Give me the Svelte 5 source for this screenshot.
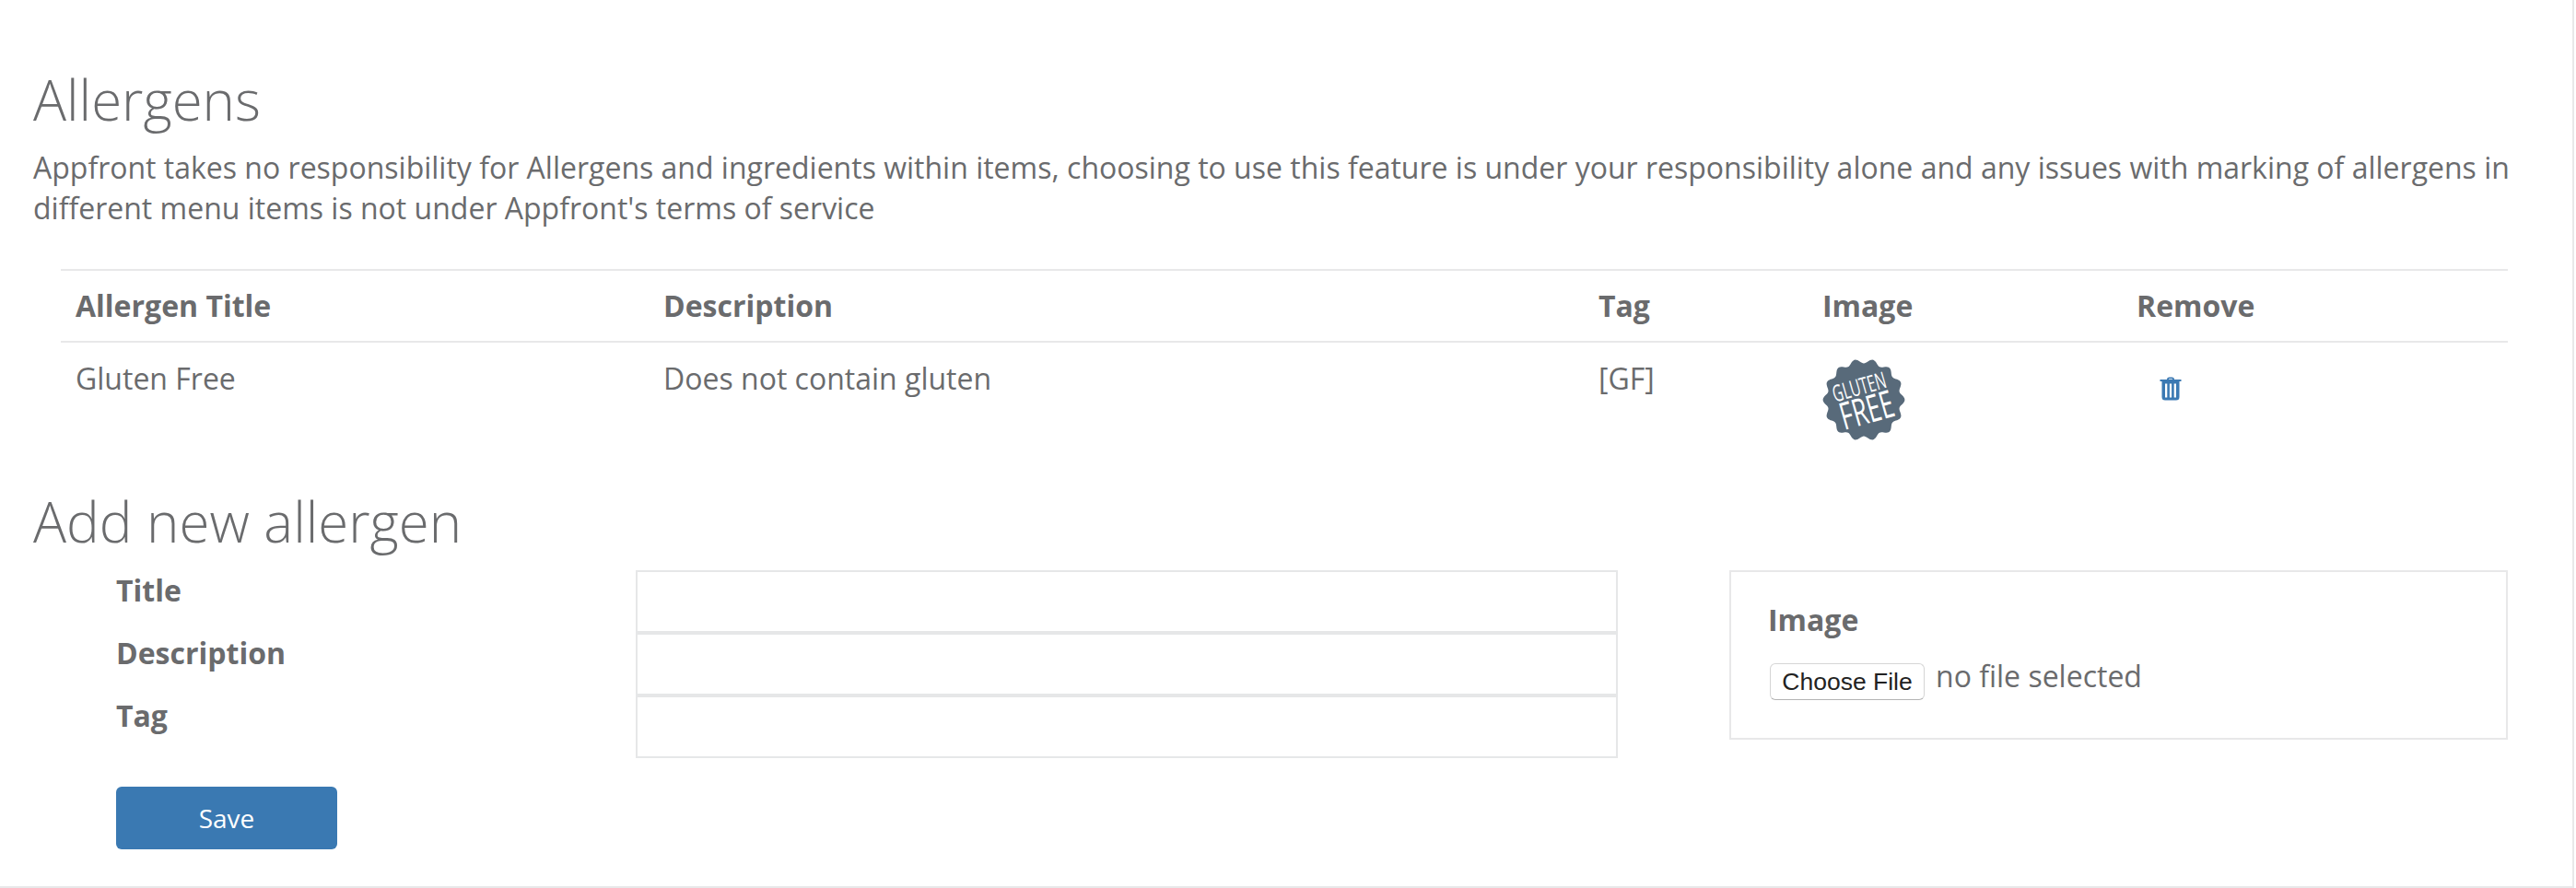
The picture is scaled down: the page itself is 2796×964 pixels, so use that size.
<script>
	const rows = [{ title: 'Gluten Free', description: 'Does not contain gluten', tag: '[GF]' }];
	const fields = ['Title', 'Description', 'Tag'];

	// scalloped edge of the badge
	const bumps = 14;
	let edge = '';
	for (let i = 0; i < 240; i++) {
		const a = (i / 240) * Math.PI * 2;
		const r = 42 + 2.4 * Math.cos(a * bumps);
		edge += (i ? 'L' : 'M') + (45 + r * Math.cos(a)).toFixed(2) + ' ' + (45 + r * Math.sin(a)).toFixed(2);
	}
	edge += 'Z';
</script>

<div class="page">
	<h2 class="first">Allergens</h2>
	<p class="notice">
		Appfront takes no responsibility for Allergens and ingredients within items, choosing to use this feature is under your responsibility alone and any issues with marking of allergens in different menu items is not under Appfront's terms of service
	</p>

	<table>
		<thead>
			<tr>
				<th class="c-title">Allergen Title</th>
				<th class="c-desc">Description</th>
				<th class="c-tag">Tag</th>
				<th class="c-img">Image</th>
				<th>Remove</th>
			</tr>
		</thead>
		<tbody>
			{#each rows as row}
				<tr>
					<td>{row.title}</td>
					<td>{row.description}</td>
					<td>{row.tag}</td>
					<td>
						<svg class="badge" viewBox="0 0 90 90" width="90" height="90">
							<path d={edge} fill="#586a7a" />
							<g transform="rotate(-16 45 45)" fill="#fff" font-family="'Open Sans', sans-serif" font-weight="400" text-anchor="middle">
								<text transform="translate(44 39) scale(0.62 1)" font-size="25">GLUTEN</text>
								<text transform="translate(45 71) scale(0.64 1)" font-size="41">FREE</text>
							</g>
						</svg>
					</td>
					<td>
						<button class="remove" type="button" aria-label="Remove">
							<svg viewBox="0 0 24 26" width="24" height="26">
								<path fill="#3b79b3" d="M8 3 Q8 0.5 10.5 0.5 H13.5 Q16 0.5 16 3 H23.5 V5 H0.5 V3 Z M9.8 3 H14.2 Q14.2 2.2 13.4 2.2 H10.6 Q9.8 2.2 9.8 3 Z" fill-rule="evenodd" />
								<path fill="#3b79b3" fill-rule="evenodd" d="M2.5 5 H21.5 V22 Q21.5 25.5 18 25.5 H6 Q2.5 25.5 2.5 22 Z M6 7.5 V22.5 H8.3 V7.5 Z M10.9 7.5 V22.5 H13.1 V7.5 Z M15.7 7.5 V22.5 H18 V7.5 Z" />
							</svg>
						</button>
					</td>
				</tr>
			{/each}
		</tbody>
	</table>

	<h2 class="second">Add new allergen</h2>
	<div class="form-row">
		<div class="labels">
			{#each fields as field}
				<label for={field}>{field}</label>
			{/each}
		</div>
		<div class="inputs">
			{#each fields as field}
				<input id={field} type="text" />
			{/each}
		</div>
		<div class="image-box">
			<div class="image-label">Image</div>
			<div class="file-row">
				<button class="choose" type="button">Choose File</button>
				<span class="no-file">no file selected</span>
			</div>
		</div>
	</div>
	<button class="save" type="button">Save</button>
</div>

<style>
	:global(body) {
		background: #fff;
	}

	.page {
		box-sizing: border-box;
		width: 2794px;
		height: 964px;
		padding: 72px 60px 0 36px;
		border-right: 2px solid #e8e8e9;
		border-bottom: 2px solid #e8e8e9;
		font-family: 'Open Sans', sans-serif;
		font-size: 32px;
		color: #6a6b6d;
		line-height: 44px;
	}

	h2 {
		margin: 0;
		font-size: 60px;
		font-weight: 300;
		line-height: 72px;
	}

	.notice {
		margin: 16px 0 0;
	}

	table {
		margin: 44px 0 0 30px;
		width: 2656px;
		border-collapse: collapse;
		table-layout: fixed;
	}

	th {
		box-sizing: border-box;
		text-align: left;
		font-weight: 700;
		padding: 16px 16px 16px;
		border-top: 2px solid #e8e8e9;
		border-bottom: 2px solid #e8e8e9;
	}

	td {
		padding: 17px 16px 0;
		vertical-align: top;
	}

	.c-title {
		width: 638px;
	}

	.c-desc {
		width: 1015px;
	}

	.c-tag {
		width: 243px;
	}

	.c-img {
		width: 341px;
	}

	.badge {
		display: block;
	}

	.remove {
		display: block;
		margin: 20px 0 0 25px;
		padding: 0;
		border: 0;
		background: none;
	}

	.remove svg {
		display: block;
	}

	.second {
		margin-top: 51px;
	}

	.form-row {
		display: flex;
		align-items: flex-start;
		margin-top: 17px;
	}

	.labels {
		display: flex;
		flex-direction: column;
		width: 564px;
		padding-left: 90px;
		box-sizing: border-box;
		gap: 24px;
		margin-right: 90px;
	}

	.labels label {
		font-weight: 700;
	}

	.inputs {
		display: flex;
		flex-direction: column;
		width: 1066px;
	}

	input {
		box-sizing: border-box;
		height: 68px;
		border: 2px solid #e6e7e8;
		background: #fff;
		padding: 0 16px;
		outline: none;
	}

	.image-box {
		box-sizing: border-box;
		width: 845px;
		height: 184px;
		margin-left: 121px;
		border: 2px solid #e8e8e9;
		padding: 30px 40px;
	}

	.image-label {
		font-weight: 700;
	}

	.file-row {
		display: flex;
		align-items: flex-start;
		gap: 12px;
		margin-top: 25px;
	}

	.choose {
		box-sizing: border-box;
		width: 168px;
		height: 40px;
		margin-left: 2px;
		padding: 0;
		border: 1px solid #d5d5d5;
		border-bottom-color: #b4b4b4;
		border-radius: 6px;
		background: #fff;
		color: #222;
		font-family: 'Liberation Sans', sans-serif;
		font-size: 26.5px;
		line-height: 38px;
	}

	.no-file {
		line-height: 40px;
		margin-top: -6px;
	}

	.save {
		display: block;
		box-sizing: border-box;
		width: 240px;
		height: 68px;
		margin: 31px 0 0 90px;
		border: 0;
		border-radius: 6px;
		background: #3a79b2;
		color: #fff;
		font-family: 'Open Sans', sans-serif;
		font-size: 28px;
	}
</style>
